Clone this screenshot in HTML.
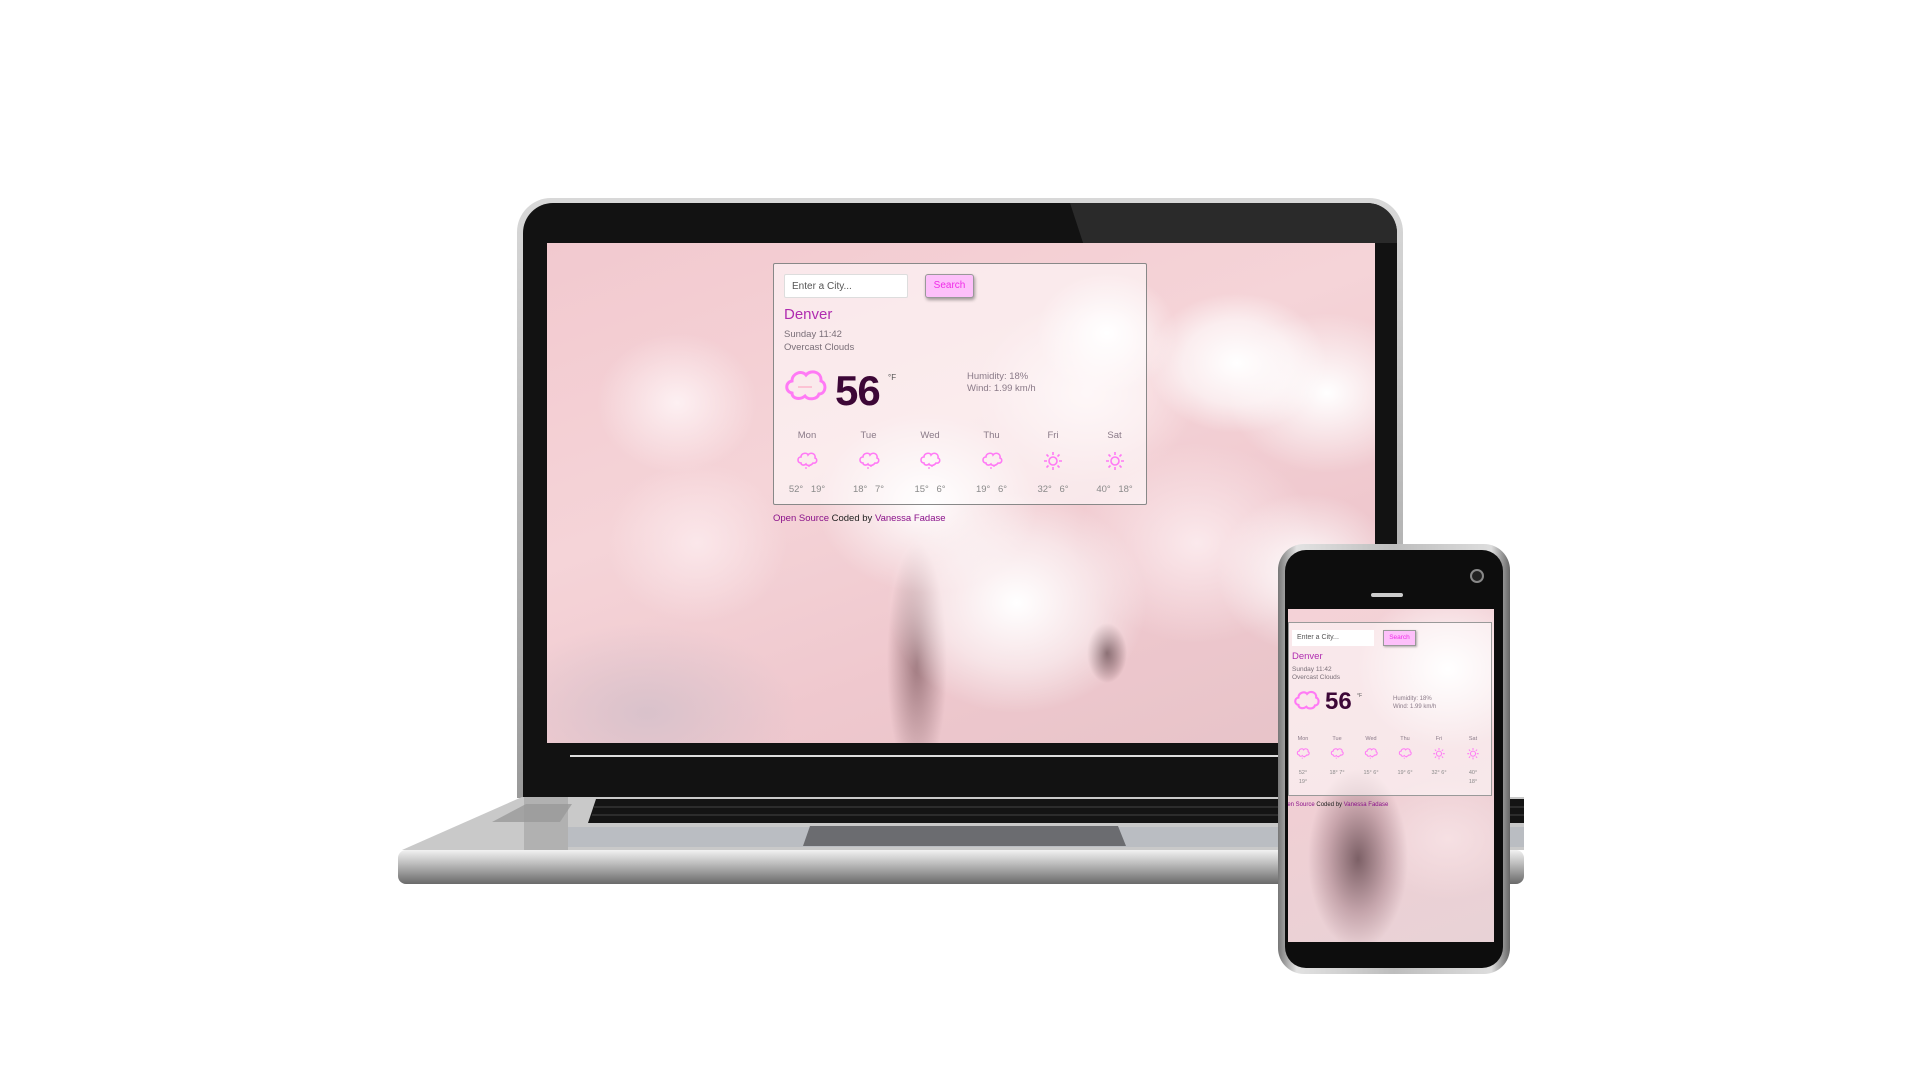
<!DOCTYPE html>
<html><head><meta charset="utf-8"><style>
*{margin:0;padding:0;box-sizing:border-box}
body{width:1920px;height:1080px;background:#fff;position:relative;overflow:hidden;font-family:"Liberation Sans",Arial,sans-serif}
.abs{position:absolute}
.lid{left:517px;top:198px;width:886px;height:600px;border-radius:34px 34px 0 0;background:linear-gradient(#d8d8d8,#9a9a9a);}
.bezel{left:523px;top:203px;width:874px;height:595px;border-radius:30px 30px 0 0;background:#121212}
.bez2{left:1070px;top:203px;width:327px;height:40px;background:#2a2a2a;border-radius:0 30px 0 0;clip-path:polygon(0 0,100% 0,100% 100%,4% 100%)}
.screen{overflow:hidden;background:
radial-gradient(ellipse 90px 70px at 690px 120px,#fff 0%,rgba(255,255,255,.6) 60%,transparent 100%),
radial-gradient(ellipse 70px 60px at 560px 90px,#fff 0%,transparent 100%),
radial-gradient(ellipse 110px 90px at 540px 150px,#fdeef0 0%,transparent 100%),
radial-gradient(ellipse 100px 80px at 780px 150px,#fff 0%,transparent 100%),
radial-gradient(ellipse 90px 80px at 760px 330px,#fff 0%,transparent 100%),
radial-gradient(ellipse 130px 110px at 470px 360px,#fff 0%,rgba(255,255,255,.5) 60%,transparent 100%),
radial-gradient(ellipse 110px 90px at 380px 260px,#fff 0%,rgba(255,255,255,.4) 60%,transparent 100%),
radial-gradient(ellipse 120px 100px at 650px 300px,#fbe9ec 0%,transparent 100%),
radial-gradient(ellipse 80px 70px at 130px 160px,#fdf0f2 0%,transparent 100%),
radial-gradient(ellipse 90px 80px at 150px 300px,#fbe7ea 0%,transparent 100%),
radial-gradient(ellipse 20px 30px at 560px 410px,#6d4a50 0%,transparent 100%),
radial-gradient(ellipse 30px 120px at 370px 420px,#a07a80 0%,transparent 100%),
radial-gradient(ellipse 150px 90px at 100px 470px,#d9c2cb 0%,transparent 100%),
linear-gradient(160deg,#f2c9cf,#f5d4d8 40%,#efc8ce 70%,#e6c3c8)}
.lap{left:547px;top:243px;width:828px;height:500px}
.card{left:226px;top:20px;width:374px;height:242px;border:1px solid #888;background:rgba(255,255,255,.55);border-radius:2px}
.inp{left:10px;top:10px;width:124px;height:24px;background:#fff;border:1px solid #ddd;border-radius:2px;font-size:10px;color:#555;padding:6px 7px}
.btn{left:151px;top:10px;width:49px;height:24px;background:#fdc0fa;border:1px solid #999;border-radius:3px;box-shadow:1px 2px 3px rgba(0,0,0,.35);font-size:10px;color:#ef2be8;text-align:center;line-height:22px}
.city{left:10px;top:42px;font-size:15px;color:#b02cb0}
.sub{left:10px;top:65px;font-size:9.5px;color:#7a6f78;line-height:12.5px}
.big{left:61px;top:103px;font-size:42px;font-weight:bold;color:#3d0737;letter-spacing:-1px}
.deg{left:114px;top:109px;font-size:8px;color:#555}
.hum{left:193px;top:107px;font-size:9.5px;color:#8a7a88;line-height:12px}
.day{width:40px;text-align:center;font-size:9.5px;color:#8a7a88}
.tmp{width:60px;text-align:center;font-size:9.5px;color:#8a8a8a;word-spacing:5px}
.foot{left:226px;top:270px;font-size:9.5px;color:#222;white-space:nowrap}
.foot b{font-weight:normal;color:#8a118a}
.base{left:398px;top:796px;width:1126px;height:88px}
.phone{left:1278px;top:544px;width:232px;height:430px;border-radius:26px;background:linear-gradient(90deg,#777,#e2e2e2 8%,#bdbdbd 50%,#ddd 92%,#666)}
.phin{left:1285px;top:550px;width:218px;height:418px;border-radius:21px;background:#0d0d0d}
.psc{left:1288px;top:609px;width:206px;height:333px}
</style></head><body>
<div class="abs lid"></div>
<div class="abs bezel"></div>
<div class="abs bez2"></div>
<div class="abs" style="left:570px;top:755px;width:740px;height:2px;background:#ddd"></div>
<div class="abs screen lap">
 <div class="abs card">
  <div class="abs inp">Enter a City...</div>
  <div class="abs btn">Search</div>
  <div class="abs city">Denver</div>
  <div class="abs sub">Sunday 11:42<br>Overcast Clouds</div>
  <svg class="abs" style="left:10px;top:103px" width="44" height="36" viewBox="0 0 44 36"><path d="M8 26 C1 25 1 15 8 14 C8 6 18 3 22 8 C27 2 38 5 37 14 C43 16 42 27 35 27 C33 33 24 33 21 29 C16 33 8 32 8 26Z" fill="none" stroke="#ff7af5" stroke-width="3"/><path d="M14 20 h14" stroke="#f9b" stroke-width="1"/></svg>
  <div class="abs big">56</div>
  <div class="abs deg">°F</div>
  <div class="abs hum">Humidity: 18%<br>Wind: 1.99 km/h</div>
  <div id="days"></div>
 </div>
 <div class="abs foot"><b>Open Source</b> Coded by <b>Vanessa Fadase</b></div>
</div>
<svg class="abs base" viewBox="0 0 1126 88" width="1126" height="88">
 <defs><linearGradient id="g1" x1="0" y1="0" x2="0" y2="1"><stop offset="0" stop-color="#f2f2f2"/><stop offset=".4" stop-color="#bdbdbd"/><stop offset="1" stop-color="#6a6a6a"/></linearGradient></defs>
 <path d="M124 1 H1126 V54 H4 Z" fill="#c9c9c9"/>
 <path d="M128 8 H174 L162 26 H94 Z" fill="#8a8a8a" opacity=".6"/>
 <rect x="126" y="1" width="44" height="55" fill="#9a9a9a" opacity=".5"/>
 <path d="M198 3 H1126 V27 H190 Z" fill="#141414"/>
 <g stroke="#444" stroke-width="1"><path d="M196 11 H1126 M194 19 H1126"/></g>
 <rect x="170" y="31" width="956" height="20" fill="#babdc2"/>
 <path d="M412 30 H720 L728 50 H405 Z" fill="#6b6c70"/>
 <rect x="0" y="54" width="1126" height="34" rx="8" fill="url(#g1)"/>
</svg>
<div class="abs phone"></div>
<div class="abs phin"></div>
<div class="abs" style="left:1371px;top:593px;width:32px;height:4px;background:#ccc;border-radius:2px"></div>
<div class="abs" style="left:1470px;top:569px;width:14px;height:14px;border-radius:50%;border:2px solid #888;background:#222"></div>
<div class="abs screen psc" style="background:radial-gradient(ellipse 50px 90px at 70px 250px,#7c6066 0%,rgba(140,100,110,.4) 60%,transparent 100%),radial-gradient(ellipse 90px 80px at 160px 60px,#fff 0%,transparent 100%),radial-gradient(ellipse 80px 60px at 160px 230px,#f6e0e3 0%,transparent 100%),linear-gradient(160deg,#f4d2d7,#f0cfd4 50%,#e8d2d6)">
 <div class="abs" style="left:0;top:13px;width:204px;height:174px;border:1px solid #999;background:rgba(255,255,255,.5)">
  <div class="abs" style="left:3px;top:7px;width:82px;height:16px;background:#fff;font-size:7px;color:#555;padding:4px 5px">Enter a City...</div>
  <div class="abs" style="left:94px;top:7px;width:33px;height:16px;background:#fdc0fa;border:1px solid #999;font-size:6.5px;color:#ef2be8;text-align:center;line-height:14px;box-shadow:1px 1px 2px rgba(0,0,0,.3)">Search</div>
  <div class="abs" style="left:3px;top:28px;font-size:9.5px;color:#b02cb0">Denver</div>
  <div class="abs" style="left:3px;top:43px;font-size:6.5px;color:#7a6f78;line-height:8px">Sunday 11:42<br>Overcast Clouds</div>
  <svg class="abs" style="left:4px;top:66px" width="28" height="22" viewBox="0 0 44 36"><path d="M8 26 C1 25 1 15 8 14 C8 6 18 3 22 8 C27 2 38 5 37 14 C43 16 42 27 35 27 C33 33 24 33 21 29 C16 33 8 32 8 26Z" fill="none" stroke="#ff7af5" stroke-width="3.5"/></svg>
  <div class="abs" style="left:36px;top:65px;font-size:24px;font-weight:bold;color:#3d0737">56</div>
  <div class="abs" style="left:68px;top:70px;font-size:5px;color:#555">°F</div>
  <div class="abs" style="left:104px;top:72px;font-size:6px;color:#8a7a88;line-height:8px">Humidity: 18%<br>Wind: 1.99 km/h</div>
  <div id="pdays"></div>
 </div>
 <div class="abs" style="left:-4px;top:193px;font-size:6px;color:#222;white-space:nowrap"><span style="color:#8a118a">pen Source</span> Coded by <span style="color:#8a118a">Vanessa Fadase</span></div>
</div>
<script>
var D=["Mon","Tue","Wed","Thu","Fri","Sat"],T=["52° 19°","18° 7°","15° 6°","19° 6°","32° 6°","40° 18°"],T1=["52°","18° 7°","15° 6°","19° 6°","32° 6°","40°"];
var cloud='<path d="M5 11 C1 11 1 5 5 5 C5 1 11 0 12 3 C14 0 20 1 19 6 C22 7 21 12 17 11 C15 14 11 14 10 12 C8 14 5 13 5 11Z" fill="none" stroke="#ff7af5" stroke-width="1.6"/><path d="M9 16h2M13 14v1" stroke="#ff7af5" stroke-width="1.3"/>';
var sun='<circle cx="11" cy="9" r="4" fill="none" stroke="#ff7af5" stroke-width="1.6"/><g stroke="#ff7af5" stroke-width="1.6"><path d="M11 0v3M11 15v3M2 9h3M17 9h3M4.5 2.5l2 2M15.5 13.5l2 2M4.5 15.5l2-2M15.5 4.5l2-2"/></g>';
var h='',p='';
for(var i=0;i<6;i++){var x=13+i*61.5;var ic=i<4?cloud:sun;
h+='<div class="abs day" style="left:'+x+'px;top:166px">'+D[i]+'</div><svg class="abs" style="left:'+(x+9)+'px;top:188px" width="22" height="19" viewBox="0 0 22 19">'+ic+'</svg><div class="abs tmp" style="left:'+(x-10)+'px;top:220px">'+T[i]+'</div>';
var px=2+i*34;
p+='<div class="abs" style="left:'+px+'px;top:113px;width:24px;text-align:center;font-size:5.5px;color:#8a7a88">'+D[i]+'</div><svg class="abs" style="left:'+(px+5)+'px;top:125px" width="14" height="12" viewBox="0 0 22 19">'+ic+'</svg><div class="abs" style="left:'+(px-2)+'px;top:146px;width:28px;text-align:center;font-size:5.5px;color:#8a8a8a;line-height:9px">'+T1[i]+(i==0?'<br>19°':i==5?'<br>18°':'')+'</div>';}
document.getElementById('days').outerHTML=h;document.getElementById('pdays').outerHTML=p;
</script>
</body></html>
